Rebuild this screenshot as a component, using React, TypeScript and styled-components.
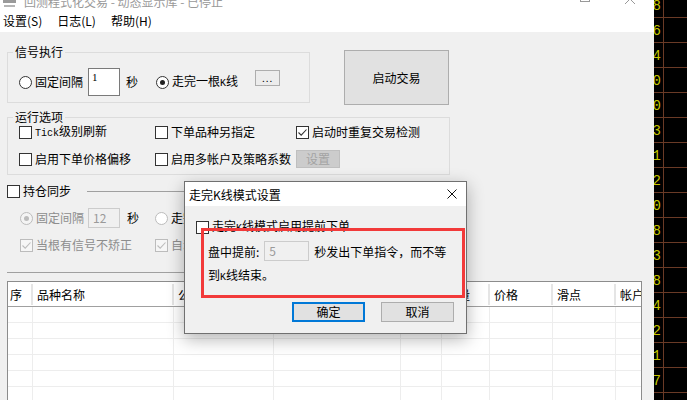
import React from "react"
import styled, { createGlobalStyle } from "styled-components"

const GlobalStyle = createGlobalStyle`
  html, body {
    margin: 0;
    padding: 0;
    background: #000;
  }
  body {
    font-family: "Noto Sans CJK SC", "Noto Sans", sans-serif;
    font-size: 12px;
    color: #000;
  }
  * {
    box-sizing: border-box;
  }
`

const Screen = styled.div`
    position: relative;
    width: 687px;
    height: 400px;
    overflow: hidden;
    display: flex;
`

const MainWindow = styled.div`
    width: 654px;
    height: 100%;
    display: flex;
    flex-direction: column;
    background: #f0f0f0;
`

const TitleBar = styled.div`
    height: 10px;
    background: #fff;
    display: flex;
    align-items: flex-start;
    padding-left: 3px;
    overflow: hidden;
`

const TitleText = styled.span`
    margin: -6px 0 0 8px;
    line-height: 16px;
    color: #999;
    white-space: nowrap;
`

const WindowControls = styled.div`
    margin-left: auto;
    margin-right: 19px;
    display: flex;
    gap: 35px;
    align-items: flex-start;
`

const MaxBox = styled.div`
    width: 10px;
    height: 10px;
    margin-top: -8px;
    border: 1px solid #999;
`

const MenuBar = styled.div`
    height: 22px;
    background: #fff;
    display: flex;
    align-items: center;
    gap: 15px;
    padding-left: 3px;
`

const MenuItem = styled.span`
    line-height: 16px;
    white-space: nowrap;
`

const Body = styled.div`
    flex: 1;
    min-height: 0;
    display: flex;
    flex-direction: column;
    padding: 13px 0 0 7px;
`

const TopRow = styled.div`
    display: flex;
    align-items: flex-start;
    gap: 34px;
`

const Group = styled.fieldset<{ $w: number; $mt?: number }>`
    margin: ${p => p.$mt || 0}px 0 0 0;
    padding: 0;
    min-width: 0;
    width: ${p => p.$w}px;
    border: 1px solid #dcdcdc;
`

const Legend = styled.legend`
    margin-left: 5px;
    padding: 0 2px;
    line-height: 14px;
    font-size: 12px;
`

const SignalRow = styled.div`
    display: flex;
    align-items: center;
    height: 28px;
    margin: 9px 0 6px 11px;
`

const OptionGrid = styled.div`
    display: grid;
    grid-template-columns: 136px 141px auto;
    grid-template-rows: 16px 18px;
    row-gap: 10px;
    align-items: center;
    padding: 0 0 6px 11px;
`

const Choice = styled.label<{ $ml?: number; $disabled?: boolean }>`
    display: inline-flex;
    align-items: center;
    gap: 3px;
    margin-left: ${p => p.$ml || 0}px;
    line-height: 16px;
    white-space: nowrap;
    color: ${p => (p.$disabled ? "#8d8d8d" : "#000")};
`

const RadioDot = styled.span<{ $checked?: boolean; $disabled?: boolean }>`
    position: relative;
    flex-shrink: 0;
    width: 13px;
    height: 13px;
    border-radius: 50%;
    border: 1px solid ${p => (p.$disabled ? "#bcbcbc" : "#333")};
    background: ${p => (p.$disabled && p.$checked ? "#f4f4f4" : "#fff")};
    &::after {
        content: "";
        display: ${p => (p.$checked ? "block" : "none")};
        position: absolute;
        inset: 3px;
        border-radius: 50%;
        background: ${p => (p.$disabled ? "#bcbcbc" : "#222")};
    }
`

const CheckSquare = styled.span<{ $disabled?: boolean }>`
    flex-shrink: 0;
    width: 13px;
    height: 13px;
    display: flex;
    align-items: center;
    justify-content: center;
    border: 1px solid ${p => (p.$disabled ? "#bcbcbc" : "#333")};
    background: ${p => (p.$disabled ? "#f6f6f6" : "#fff")};
`

const Bitmap = styled.span`
    font-family: "Liberation Mono", monospace;
    font-size: 10px;
`

const TextBox = styled.div<{ $w: number; $h: number; $ml?: number; $top?: boolean; $disabled?: boolean }>`
    width: ${p => p.$w}px;
    height: ${p => p.$h}px;
    margin-left: ${p => p.$ml || 0}px;
    display: flex;
    align-items: ${p => (p.$top ? "flex-start" : "center")};
    padding: ${p => (p.$top ? "2px 3px" : "0 4px")};
    border: 1px solid ${p => (p.$disabled ? "#cccccc" : "#7a7a7a")};
    background: ${p => (p.$disabled ? "#f0f0f0" : "#fff")};
    color: ${p => (p.$disabled ? "#9a9a9a" : "#000")};
    font-family: ${p => (p.$top ? `"Liberation Serif", serif` : "inherit")};
    font-size: ${p => (p.$top ? 11 : 12)}px;
    line-height: 12px;
`

const Unit = styled.span<{ $ml: number }>`
    margin-left: ${p => p.$ml}px;
    line-height: 16px;
`

const PushButton = styled.button<{ $w: number; $h: number; $ml?: number; $primary?: boolean; $disabled?: boolean }>`
    width: ${p => p.$w}px;
    height: ${p => p.$h}px;
    margin-left: ${p => p.$ml || 0}px;
    padding: 0;
    font: inherit;
    font-size: 12px;
    line-height: 14px;
    color: ${p => (p.$disabled ? "#a3a3a3" : "#000")};
    background: ${p => (p.$disabled ? "#cccccc" : "#e1e1e1")};
    border: ${p => (p.$primary ? "2px solid #0078d7" : p.$disabled ? "1px solid #bfbfbf" : "1px solid #adadad")};
`

const DotsButton = styled(PushButton)`
    margin-bottom: 8px;
    background: #ececec;
    font-size: 10px;
    letter-spacing: 1px;
`

const StartButton = styled(PushButton)`
    margin-top: 5px;
`

const SyncGroup = styled.div`
    width: 443px;
    margin-top: 8px;
    padding-bottom: 19px;
    border-bottom: 1px solid #a0a0a0;
`

const SyncHeader = styled.div`
    display: flex;
    align-items: center;
    height: 16px;
`

const SyncLine = styled.div`
    flex: 1;
    margin-left: 16px;
    border-top: 1px solid #a0a0a0;
`

const SyncRow = styled.div`
    display: flex;
    align-items: center;
    height: 20px;
    margin: 9px 0 0 13px;
`

const SyncChecks = styled.div`
    display: grid;
    grid-template-columns: 135px auto;
    height: 16px;
    align-items: center;
    margin: 9px 0 0 13px;
`

const columns = "25px 141px 100px 127px 41px 48px 63px 63px 80px"
const headers = ["序", "品种名称", "公式名称", "信号时间", "方向", "数量", "价格", "滑点", "帐户"]

const Table = styled.div`
    margin-top: 8px;
    width: 635px;
    flex: 1;
    border: 1px solid #8c8c8c;
    border-bottom: none;
    background: #fff;
    overflow: hidden;
`

const HeadRow = styled.div`
    display: grid;
    grid-template-columns: ${columns};
    height: 25px;
    border-bottom: 1px solid #a0a0a0;
`

const HeadCell = styled.div<{ $pad: number }>`
    position: relative;
    display: flex;
    align-items: center;
    padding-left: ${p => p.$pad}px;
    white-space: nowrap;
    overflow: hidden;
    &::after {
        content: "";
        position: absolute;
        right: 0;
        top: 2px;
        bottom: 1px;
        width: 2px;
        background: #e5e5e5;
    }
`

const BodyRow = styled.div`
    display: grid;
    grid-template-columns: ${columns};
    height: 16px;
    border-bottom: 1px solid #ededed;
`

const BodyCell = styled.div`
    border-right: 1px solid #ededed;
`

const ChartStrip = styled.svg`
    display: block;
    width: 33px;
    height: 400px;
    background: #000;
`

const Dialog = styled.div`
    position: absolute;
    left: 184px;
    top: 181px;
    width: 283px;
    height: 153px;
    display: flex;
    flex-direction: column;
    background: #f0f0f0;
    border: 1px solid #707070;
    box-shadow: 0 5px 16px rgba(0, 0, 0, 0.3);
`

const DialogTitle = styled.div`
    height: 24px;
    display: flex;
    align-items: center;
    justify-content: space-between;
    padding: 0 9px 0 4px;
    background: #fff;
`

const DialogBody = styled.div`
    flex: 1;
    display: flex;
    flex-direction: column;
    padding: 12px 12px 11px 11px;
`

const PromptRow = styled.div<{ $mt: number; $h: number }>`
    display: flex;
    align-items: center;
    gap: 5px;
    height: ${p => p.$h}px;
    margin: ${p => p.$mt}px 0 0 12px;
    white-space: nowrap;
`

const DialogButtons = styled.div`
    margin-top: auto;
    display: flex;
    justify-content: flex-end;
    gap: 16px;
`

const Highlight = styled.div`
    position: absolute;
    left: 16px;
    top: 46px;
    width: 264px;
    height: 70px;
    border: 3px solid #f23a3a;
`

function Radio({ label, checked, disabled, ml }: { label: React.ReactNode; checked?: boolean; disabled?: boolean; ml?: number }) {
    return (
        <Choice $ml={ml} $disabled={disabled}>
            <RadioDot $checked={checked} $disabled={disabled} />
            {label}
        </Choice>
    )
}

function Check({ label, checked, disabled }: { label: React.ReactNode; checked?: boolean; disabled?: boolean }) {
    return (
        <Choice $disabled={disabled}>
            <CheckSquare $disabled={disabled}>
                {checked && (
                    <svg width="11" height="11" viewBox="0 0 11 11">
                        <path d="M1.5 5.5 L4.2 8.2 L9.5 2.5" fill="none" stroke={disabled ? "#bcbcbc" : "#333"} strokeWidth="1.1" />
                    </svg>
                )}
            </CheckSquare>
            {label}
        </Choice>
    )
}

const chartDigits = ["8", "6", "4", "0", "0", "3", "1", "2", "0", "8", "3", "8", "4", "2", "1", "7"]

function App() {
    return (
        <>
            <GlobalStyle />
            <Screen>
                <MainWindow>
                    <TitleBar>
                        <svg width="13" height="8" viewBox="0 0 13 8">
                            <rect x="0" y="0" width="13" height="3" fill="#9a9a9a" />
                            <rect x="1" y="5" width="11" height="2" fill="#b5b5b5" />
                        </svg>
                        <TitleText>回测程式化交易 - 动态显示库 - 已停止</TitleText>
                        <WindowControls>
                            <MaxBox />
                            <svg width="10" height="4" viewBox="0 0 10 4">
                                <path d="M0 -6 L10 4 M10 -6 L0 4" stroke="#999" strokeWidth="1" />
                            </svg>
                        </WindowControls>
                    </TitleBar>
                    <MenuBar>
                        <MenuItem>设置(S)</MenuItem>
                        <MenuItem>日志(L)</MenuItem>
                        <MenuItem>帮助(H)</MenuItem>
                    </MenuBar>
                    <Body>
                        <TopRow>
                            <Group $w={303}>
                                <Legend>信号执行</Legend>
                                <SignalRow>
                                    <Radio label="固定间隔" />
                                    <TextBox $w={32} $h={28} $ml={5} $top>1</TextBox>
                                    <Unit $ml={6}>秒</Unit>
                                    <Radio label={<span>走完一根<Bitmap>K</Bitmap>线</span>} checked ml={18} />
                                    <DotsButton $w={25} $h={16} $ml={17}>...</DotsButton>
                                </SignalRow>
                            </Group>
                            <StartButton $w={105} $h={55}>启动交易</StartButton>
                        </TopRow>
                        <Group $w={443} $mt={5}>
                            <Legend>运行选项</Legend>
                            <OptionGrid>
                                <Check label={<span><Bitmap>Tick</Bitmap>级别刷新</span>} />
                                <Check label="下单品种另指定" />
                                <Check label="启动时重复交易检测" checked />
                                <Check label="启用下单价格偏移" />
                                <Check label="启用多帐户及策略系数" />
                                <PushButton $w={44} $h={18} $disabled>设置</PushButton>
                            </OptionGrid>
                        </Group>
                        <SyncGroup>
                            <SyncHeader>
                                <Check label="持仓同步" />
                                <SyncLine />
                            </SyncHeader>
                            <SyncRow>
                                <Radio label="固定间隔" checked disabled />
                                <TextBox $w={32} $h={20} $ml={4} $disabled>12</TextBox>
                                <Unit $ml={7}>秒</Unit>
                                <Choice $ml={16}>
                                    <RadioDot $disabled />
                                    走完一根<Bitmap>K</Bitmap>线
                                </Choice>
                            </SyncRow>
                            <SyncChecks>
                                <Check label="当根有信号不矫正" checked disabled />
                                <Check label="自动补单" checked disabled />
                            </SyncChecks>
                        </SyncGroup>
                        <Table>
                            <HeadRow>
                                {headers.map((h, i) => (
                                    <HeadCell key={h} $pad={i === 0 ? 2 : 4}>{h}</HeadCell>
                                ))}
                            </HeadRow>
                            {[0, 1, 2, 3, 4, 5].map(r => (
                                <BodyRow key={r}>
                                    {headers.map(h => (
                                        <BodyCell key={h} />
                                    ))}
                                </BodyRow>
                            ))}
                        </Table>
                    </Body>
                </MainWindow>
                <ChartStrip viewBox="0 0 33 400">
                    <line x1="9.5" y1="0" x2="9.5" y2="400" stroke="#6a3a26" strokeWidth="1" />
                    {chartDigits.map((d, i) => (
                        <g key={i}>
                            <line x1="0" y1={17.5 + i * 25} x2="33" y2={17.5 + i * 25} stroke="#6a3a26" strokeWidth="1" />
                            <text x="-1.5" y={10 + i * 25} fill="#c8c800" fontFamily="Liberation Mono, monospace" fontSize="14">{d}</text>
                        </g>
                    ))}
                </ChartStrip>
                <Dialog>
                    <DialogTitle>
                        <span>走完K线模式设置</span>
                        <svg width="10" height="10" viewBox="0 0 10 10">
                            <path d="M0.5 0.5 L9.5 9.5 M9.5 0.5 L0.5 9.5" stroke="#111" strokeWidth="1" />
                        </svg>
                    </DialogTitle>
                    <DialogBody>
                        <Check label={<span>走完<Bitmap>K</Bitmap>线模式启用提前下单</span>} />
                        <PromptRow $mt={4} $h={20}>
                            <span>盘中提前:</span>
                            <TextBox $w={45} $h={20} $disabled>5</TextBox>
                            <span>秒发出下单指令，而不等</span>
                        </PromptRow>
                        <PromptRow $mt={5} $h={16}>
                            <span>到<Bitmap>K</Bitmap>线结束。</span>
                        </PromptRow>
                        <DialogButtons>
                            <PushButton $w={73} $h={20} $primary>确定</PushButton>
                            <PushButton $w={73} $h={20}>取消</PushButton>
                        </DialogButtons>
                    </DialogBody>
                    <Highlight />
                </Dialog>
            </Screen>
        </>
    )
}

export default App
